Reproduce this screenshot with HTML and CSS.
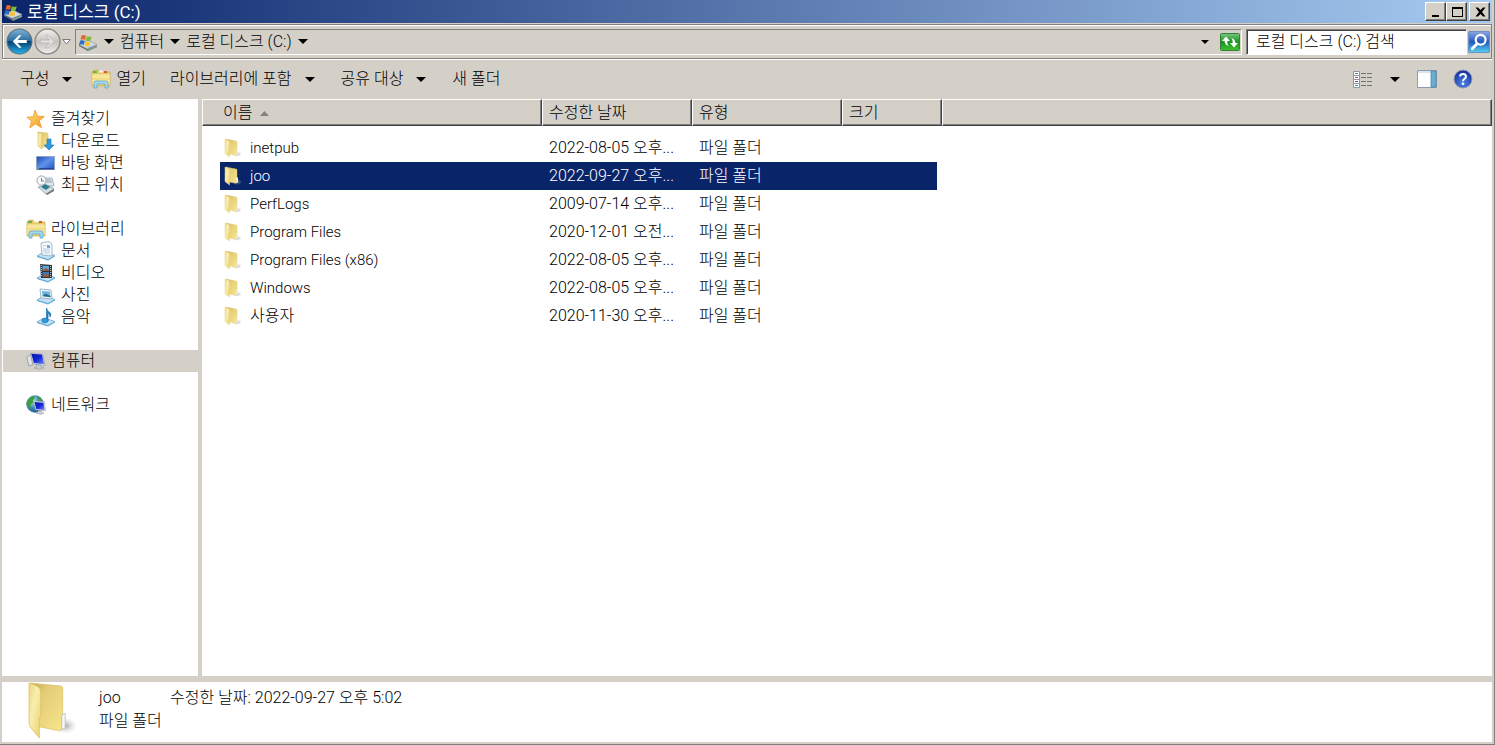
FILE: index.html
```html
<!DOCTYPE html>
<html lang="ko">
<head>
<meta charset="utf-8">
<title>로컬 디스크 (C:)</title>
<link rel="stylesheet" href="styles.css">
</head>
<body>
<svg class="defs" aria-hidden="true">
  <defs>
    <linearGradient id="gFold" x1="0" y1="0" x2="1" y2="1"><stop offset="0" stop-color="#ecd67c"/><stop offset=".4" stop-color="#f9eeb0"/><stop offset="1" stop-color="#ebd068"/></linearGradient>
    <linearGradient id="gFoldBack" x1="0" y1="0" x2="1" y2="1"><stop offset="0" stop-color="#c0a24e"/><stop offset=".3" stop-color="#e3cb78"/><stop offset="1" stop-color="#f8e68a"/></linearGradient>
    <linearGradient id="gBlue" x1="0" y1="0" x2="0" y2="1"><stop offset="0" stop-color="#7fb2d4"/><stop offset=".48" stop-color="#2a6da0"/><stop offset=".5" stop-color="#07406f"/><stop offset="1" stop-color="#24b4ee"/></linearGradient>
    <linearGradient id="gGrey" x1="0" y1="0" x2="0" y2="1"><stop offset="0" stop-color="#f4f3f1"/><stop offset=".5" stop-color="#c4c2be"/><stop offset="1" stop-color="#eeedeb"/></linearGradient>
    <linearGradient id="gScreen" x1="0" y1="0" x2="1" y2="1"><stop offset="0" stop-color="#0a1aa0"/><stop offset=".5" stop-color="#1024d8"/><stop offset="1" stop-color="#6f8cf4"/></linearGradient>
    <linearGradient id="gDesk" x1="0" y1="0" x2="1" y2="1"><stop offset="0" stop-color="#1c48b4"/><stop offset=".5" stop-color="#5f92ea"/><stop offset="1" stop-color="#1f4fc0"/></linearGradient>
    <linearGradient id="gGreen" x1="0" y1="0" x2="0" y2="1"><stop offset="0" stop-color="#7cc47c"/><stop offset=".5" stop-color="#199422"/><stop offset="1" stop-color="#3fc32e"/></linearGradient>
    <linearGradient id="gSearch" x1="0" y1="0" x2="0" y2="1"><stop offset="0" stop-color="#8fa6e2"/><stop offset=".5" stop-color="#2358c0"/><stop offset="1" stop-color="#55d4f2"/></linearGradient>
    <linearGradient id="gStar" x1="0" y1="0" x2="1" y2="1"><stop offset="0" stop-color="#ffe680"/><stop offset="1" stop-color="#f3941c"/></linearGradient>
    <radialGradient id="gHelp" cx=".5" cy=".75" r=".7"><stop offset="0" stop-color="#4f86e6"/><stop offset="1" stop-color="#15309a"/></radialGradient>
    <radialGradient id="gGlobe" cx=".35" cy=".3" r=".8"><stop offset="0" stop-color="#bfe6ee"/><stop offset=".5" stop-color="#3f8fc4"/><stop offset="1" stop-color="#164a86"/></radialGradient>
    <radialGradient id="gShadow"><stop offset="0" stop-color="#8a8a90" stop-opacity=".7"/><stop offset="1" stop-color="#c8c8cc" stop-opacity="0"/></radialGradient>
  </defs>
  <symbol id="drive" viewBox="0 0 20 20">
    <path d="M1 12.500l8 4.500 10-4v2l-9 4-9-5z" fill="#5b6670"/>
    <path d="M1 12.500l9-4.500 9 4.500-10 4z" fill="#d3d8dc" stroke="#8b959d" stroke-width=".6"/>
    <path d="M9 17l10-4v2l-9 3.800z" fill="#8a959f"/><path d="M12 16.800l2-.8" stroke="#3fc040"/>
    <path d="M3.500 3.500q2.500-1 4.500 .4L7 8Q5 6.800 2.500 7.700z" fill="#e5652a"/><path d="M8.800 4.200q2.500 1.200 5 .2L12.500 8.500q-2.500 1-4.700 0z" fill="#7cbc3c"/>
    <path d="M2.200 8.600q2.500-1 4.500.3L5.700 13q-2.200-1.200-4.700-.3z" fill="#2f6fc8"/><path d="M7.500 9.300q2.500 1.200 4.800.2l-1 4.200q-2.500 1-4.800-.2z" fill="#f3c22c"/>
  </symbol>
  <symbol id="folder" viewBox="0 0 48 56">
    <ellipse cx="37" cy="43" rx="11" ry="8" fill="url(#gShadow)"/>
    <path d="M2 1L32 4q2 0 2 2v40l-3 2-20-4z" fill="url(#gFoldBack)" stroke="#d9bf66" stroke-width=".7"/>
    <path d="M33 32l3.500-1v14l-3.500 2z" fill="#f6f6f4" stroke="#a7b6b8" stroke-width=".7"/>
    <path d="M1 1q11 3 11.500 8v25l-1.500 1v20L2 44Q1 43 1 40z" fill="url(#gFold)" stroke="#dcc065" stroke-width=".8"/>
  </symbol>
  <symbol id="folder-small" viewBox="0 0 18 20">
    <ellipse cx="13" cy="16" rx="5" ry="3" fill="url(#gShadow)"/>
    <path d="M2 1l10 2q1 .2 1 1v12.500l-1 .7L5 16z" fill="url(#gFoldBack)" stroke="#e0c66c" stroke-width=".4"/>
    <path d="M12.500 11.500h1.500v5l-1.500.5z" fill="#eef0ea"/>
    <path d="M1 1q4 1 4.500 3v15L1.500 16Q1 15.500 1 15z" fill="url(#gFold)" stroke="#e8d58a" stroke-width=".5"/>
  </symbol>
  <symbol id="star" viewBox="0 0 20 20"><path d="M9 1l2.500 6.200 7 .2-5.300 4.400 2.400 7-6.100-3.900-5.700 4 1.700-6.800L.8 8.300l6.300-.6z" fill="url(#gStar)" stroke="#ee9a32" stroke-width=".8" stroke-linejoin="round"/></symbol>
  <symbol id="download" viewBox="0 0 20 20">
    <path d="M2 1l10 1.200v14L5 16z" fill="url(#gFoldBack)" stroke="#d3b458" stroke-width=".5"/><path d="M2 1q4 .5 4 3v14l-4-3z" fill="url(#gFold)" stroke="#d3b458" stroke-width=".5"/>
    <path d="M11 8h4v6h3l-5 5-5-5h3z" fill="#2e9be0" stroke="#1d6dae" stroke-width=".6"/>
  </symbol>
  <symbol id="desktop" viewBox="0 0 20 20"><path d="M.5 3.500h18v13h-18z" fill="url(#gDesk)" stroke="#8fa6c8"/><path d="M1 15h17v1.500H1z" fill="#29449a"/><path d="M1 15.300h2" stroke="#6cd05c"/></symbol>
  <symbol id="recent" viewBox="0 0 20 20">
    <path d="M6 3h10l2 8H8z" fill="#dfe9ee" stroke="#8498a4" stroke-width=".7"/><path d="M8 5h7M8 7h8" stroke="#8ba2ae"/>
    <circle cx="5.500" cy="5.500" r="4.600" fill="#f6f8fa" stroke="#9aa6b0"/><path d="M5.500 3v3h2.500" stroke="#556" fill="none" stroke-width=".8"/>
    <path d="M2 12l9-2 7 4-8 5z" fill="#d6dde2" stroke="#7d8991" stroke-width=".7"/><path d="M5 12l4-3 5 3-4 3z" fill="#2d7c96"/><path d="M10 19l8-5v2l-7 4z" fill="#69747c"/>
  </symbol>
  <symbol id="library" viewBox="0 0 20 20">
    <path d="M1 3l2-2h4l1 2h11v14H1z" fill="#e9cd6a" stroke="#caa948" stroke-width=".6"/>
    <path d="M2 2h4v2H2z" fill="#65b257"/><path d="M8 1.500h4v2H8z" fill="#f6f4ea"/><path d="M13 2h3v2h-3z" fill="#d85838"/>
    <path d="M1 5h18v11H1z" fill="#f7e69c" stroke="#d9bd5e" stroke-width=".5"/><path d="M1 10h18" stroke="#ecd272"/>
    <path d="M3 19v-5q0-2 2-2h10q2 0 2 2v5h-3v-4H6v4z" fill="#a6d8ee" stroke="#4fa0c4" stroke-width=".7"/>
  </symbol>
  <symbol id="tray" viewBox="0 0 20 20"><path d="M1 15l7-4 11 3.500-7 4z" fill="#c4e2f4" stroke="#5faad4" stroke-width=".8"/><path d="M1 15v1l11 3.500 7-4v-1l-7 4z" fill="#5ea9d2"/></symbol>
  <symbol id="docs" viewBox="0 0 20 20"><use href="#tray"/><path d="M5 2l8-1.500 3 2.500v12L6 14z" fill="#f6f9fc" stroke="#8fa8c0" stroke-width=".8"/><path d="M7 5l3-.6M7 8h7M7 10h7M8 12h6" stroke="#a9c0dc" stroke-width=".8"/><path d="M11 4l3 .5v2.500l-3-.3z" fill="#7399cc"/></symbol>
  <symbol id="video" viewBox="0 0 20 20"><use href="#tray"/><path d="M4 1l12 1v13L5 15z" fill="#2b3338"/><path d="M6.500 2.500l6.500.4v5l-6.500 0z" fill="#5fa8dc"/><path d="M6.500 9h6.500v5l-6.500-.3z" fill="#3a78b8"/><path d="M7 7l3-2 3 2v1H7zM7 12l3-1 3 1v2H7z" fill="#9a5a34"/><path d="M5.200 2v12M14.700 3v12" stroke="#dfe5e8" stroke-width="1" stroke-dasharray="1 1"/></symbol>
  <symbol id="photo" viewBox="0 0 20 20"><use href="#tray"/><path d="M4 4l11 1 1 9-11-1z" fill="#f4f8fa" stroke="#8ba5b8" stroke-width=".8"/><path d="M6 6l8 .6.500 5.600-8-.8z" fill="#6cb8e4"/><path d="M6.500 11l3-2.500 5 2.500v1.200z" fill="#2e6d8a"/></symbol>
  <symbol id="music" viewBox="0 0 20 20"><use href="#tray"/><path d="M10.500 13V1q.5 3 3 4.200Q16 7 14 10q.2-3-2-3.600V14" fill="#2386c8" stroke="#1b6fae" stroke-width=".7"/><ellipse cx="9" cy="13.500" rx="3.200" ry="2.300" fill="#2f9ada" stroke="#1b6fae" stroke-width=".6"/></symbol>
  <symbol id="computer" viewBox="0 0 20 20">
    <path d="M.8 6l4-2.500 2 10-4 1.500z" fill="#dfe2e6" stroke="#8b9096" stroke-width=".7"/><path d="M4.500 2l12 .8L19 14.500 7 12.800z" fill="#e5e7ec" stroke="#8d93a0" stroke-width=".6"/>
    <path d="M5.300 2.700l10.700.8 2.100 9.800-10.200-1.200z" fill="url(#gScreen)"/><path d="M10 13.500l5 .7v2l3 .6-4 1.700-6-1.400 2.500-.8z" fill="#c5cad0" stroke="#8b9096" stroke-width=".5"/>
  </symbol>
  <symbol id="network" viewBox="0 0 20 20">
    <circle cx="9" cy="9" r="8.500" fill="url(#gGlobe)" stroke="#3b769a" stroke-width=".4"/><path d="M2 5q3-4 6-4 2 2-1 4 1 3-2 4-1 3 0 5-4-2-4.500-6zM11 1.500q4 1 5 5l-4-1z" fill="#3b9f44"/>
    <path d="M7.500 6l11 .8 1 9-10-1z" fill="#e8eaee" stroke="#8d93a0" stroke-width=".5"/><path d="M8.500 7l9 .7 1 7.200-8.300-.9z" fill="url(#gScreen)"/><path d="M12 15.500l4 .5v1.500l2 .5-3 1.500-5-1.200 2-.8z" fill="#c9cdd3" stroke="#8b9096" stroke-width=".4"/>
  </symbol>
  <symbol id="down" viewBox="0 0 10 5"><path d="M0 0h10L5 5z"/></symbol>
</svg>

<div class="window">
  <header class="titlebar">
    <svg class="ico"><use href="#drive"/></svg>
    <h1>로컬 디스크 (C:)</h1>
    <div class="caption">
      <button type="button" aria-label="최소화"><svg viewBox="0 0 12 12"><path d="M2 9h7v2H2z"/></svg></button>
      <button type="button" aria-label="최대화"><svg viewBox="0 0 12 12"><path d="M1 1h11v10H1zM2 3v7h9V3z" fill-rule="evenodd"/></svg></button>
      <button type="button" class="close" aria-label="닫기"><svg viewBox="0 0 12 12"><path d="M1.500 1.500h2.500L6.500 4 9 1.500h2.500L8 6l3.500 4.500H9L6.500 8 4 10.500H1.500L5 6z"/></svg></button>
    </div>
  </header>

  <nav class="addressbar">
    <div class="travel">
      <button type="button" aria-label="뒤로"><svg viewBox="0 0 26 26"><circle cx="13" cy="13" r="12" fill="url(#gBlue)" stroke="#5b6f80"/><path d="M6.500 13l6-6h2.500l-4 4.600h9v2.800h-9l4 4.600h-2.500z" fill="#fff"/></svg></button>
      <button type="button" aria-label="앞으로"><svg viewBox="0 0 26 26"><circle cx="13" cy="13" r="12" fill="url(#gGrey)" stroke="#8d8c8a" stroke-width="1.400"/><path d="M19.500 13l-6-6H11l4 4.600H6v2.800h9L11 19h2.500z" fill="#e4e2df" stroke="#b3b1ad" stroke-width=".7"/></svg></button>
      <button type="button" class="history" aria-label="최근 페이지"><svg viewBox="0 0 9 6"><path d="M.8.5h7.400L4.500 5z" fill="#fff" stroke="#77787c"/></svg></button>
    </div>
    <div class="address">
      <svg class="ico"><use href="#drive"/></svg>
      <svg class="arrow"><use href="#down"/></svg>
      <a href="#computer">컴퓨터</a>
      <svg class="arrow"><use href="#down"/></svg>
      <a href="#c">로컬 디스크 (C:)</a>
      <svg class="arrow"><use href="#down"/></svg>
      <button type="button" class="recent" aria-label="이전 위치"><svg class="small-arrow"><use href="#down"/></svg></button>
      <button type="button" aria-label="새로 고침"><svg class="refresh" viewBox="0 0 20 18"><rect x=".5" y=".5" width="19" height="17" rx="1" fill="url(#gGreen)" stroke="#37803a"/><path d="M6 3.500L2 8h2.600q.2 4 4 5Q7 11 7.300 8H10zM14 14.500l4-4.500h-2.600q-.2-4-4-5 1.600 2 1.300 5H10z" fill="#fff"/></svg></button>
    </div>
    <div class="search">
      <input type="text" aria-label="검색" placeholder="로컬 디스크 (C:) 검색">
      <button type="button" aria-label="검색 실행"><svg viewBox="0 0 20 20"><rect x=".5" y=".5" width="19" height="19" rx="1" fill="url(#gSearch)" stroke="#6f8fc4"/><circle cx="11.500" cy="8" r="4.500" fill="none" stroke="#fff" stroke-width="2"/><path d="M8.300 11.500L4 16" stroke="#fff" stroke-width="2.600" stroke-linecap="round"/></svg></button>
    </div>
  </nav>

  <div class="toolbar">
    <button type="button">구성<svg class="arrow"><use href="#down"/></svg></button>
    <button type="button" class="open"><svg class="ico"><use href="#library"/></svg>열기</button>
    <button type="button">라이브러리에 포함<svg class="arrow"><use href="#down"/></svg></button>
    <button type="button">공유 대상<svg class="arrow"><use href="#down"/></svg></button>
    <button type="button">새 폴더</button>
    <div class="tools">
      <button type="button" class="view" aria-label="보기"><svg class="ico" viewBox="0 0 20 20"><path d="M.5 2.500h6v4h-6zM.5 6.500h6v4h-6zM.5 10.500h6v4h-6zM.5 14.500h6v4h-6z" fill="#fff" stroke="#8b95a3"/><path d="M2 4.500h3M2 16.500h3" stroke="#3a9a9c"/><path d="M2 8.500h3" stroke="#b84a6c"/><path d="M2 12.500h3" stroke="#5548a8"/><path d="M8 4.500h5m1 0h5M8 8.500h5m1 0h5M8 12.500h5m1 0h5M8 16.500h5m1 0h5" stroke="#6d747c"/></svg><svg class="arrow"><use href="#down"/></svg></button>
      <button type="button" aria-label="미리 보기 창"><svg class="ico" viewBox="0 0 20 20"><path d="M.5 1.500h19v17H.5z" fill="#fff" stroke="#8b9cb0"/><path d="M1 2h18v2H1z" fill="#d9e6f2"/><path d="M14 2h5v16h-5z" fill="#69b0d0" stroke="#4a86ac" stroke-width=".8"/></svg></button>
      <button type="button" aria-label="도움말"><svg class="ico" viewBox="0 0 20 20"><circle cx="10" cy="10" r="9" fill="url(#gHelp)" stroke="#8f98bc"/><path d="M7 7.500Q7.200 5 10 5t3 2.500q0 1.500-1.700 2.500-1.300.8-1.300 2.200" fill="none" stroke="#fff" stroke-width="2"/><circle cx="10" cy="14.800" r="1.300" fill="#fff"/></svg></button>
    </div>
  </div>

  <div class="body">
    <aside class="sidebar">
      <ul>
        <li><a href="#fav"><svg class="ico"><use href="#star"/></svg>즐겨찾기</a></li>
        <li class="sub"><a href="#dl"><svg class="ico"><use href="#download"/></svg>다운로드</a></li>
        <li class="sub"><a href="#desk"><svg class="ico"><use href="#desktop"/></svg>바탕 화면</a></li>
        <li class="sub"><a href="#rec"><svg class="ico"><use href="#recent"/></svg>최근 위치</a></li>
      </ul>
      <ul>
        <li><a href="#lib"><svg class="ico"><use href="#library"/></svg>라이브러리</a></li>
        <li class="sub"><a href="#doc"><svg class="ico"><use href="#docs"/></svg>문서</a></li>
        <li class="sub"><a href="#vid"><svg class="ico"><use href="#video"/></svg>비디오</a></li>
        <li class="sub"><a href="#pic"><svg class="ico"><use href="#photo"/></svg>사진</a></li>
        <li class="sub"><a href="#mus"><svg class="ico"><use href="#music"/></svg>음악</a></li>
      </ul>
      <ul>
        <li class="current"><a href="#pc"><svg class="ico"><use href="#computer"/></svg>컴퓨터</a></li>
      </ul>
      <ul>
        <li><a href="#net"><svg class="ico"><use href="#network"/></svg>네트워크</a></li>
      </ul>
    </aside>

    <main class="files">
      <table>
        <colgroup><col class="c-name"><col class="c-date"><col class="c-type"><col class="c-size"><col></colgroup>
        <thead><tr><th scope="col">이름<svg class="sort" viewBox="0 0 9 5"><path d="M0 5h9L4.500 0z" fill="#85827c"/></svg></th><th scope="col">수정한 날짜</th><th scope="col">유형</th><th scope="col">크기</th><th></th></tr></thead>
        <tbody>
          <tr><td><span class="name latin"><svg class="fold"><use href="#folder-small"/></svg>inetpub</span></td><td>2022-08-05 오후...</td><td>파일 폴더</td><td></td></tr>
          <tr class="selected"><td><span class="name latin"><svg class="fold"><use href="#folder-small"/></svg>joo</span></td><td>2022-09-27 오후...</td><td>파일 폴더</td><td></td></tr>
          <tr><td><span class="name latin"><svg class="fold"><use href="#folder-small"/></svg>PerfLogs</span></td><td>2009-07-14 오후...</td><td>파일 폴더</td><td></td></tr>
          <tr><td><span class="name latin"><svg class="fold"><use href="#folder-small"/></svg>Program Files</span></td><td>2020-12-01 오전...</td><td>파일 폴더</td><td></td></tr>
          <tr><td><span class="name latin"><svg class="fold"><use href="#folder-small"/></svg>Program Files (x86)</span></td><td>2022-08-05 오후...</td><td>파일 폴더</td><td></td></tr>
          <tr><td><span class="name latin"><svg class="fold"><use href="#folder-small"/></svg>Windows</span></td><td>2022-08-05 오후...</td><td>파일 폴더</td><td></td></tr>
          <tr><td><span class="name"><svg class="fold"><use href="#folder-small"/></svg>사용자</span></td><td>2020-11-30 오후...</td><td>파일 폴더</td><td></td></tr>
        </tbody>
      </table>
    </main>
  </div>

  <footer class="details">
    <svg class="big"><use href="#folder"/></svg>
    <div><p>joo</p><p>파일 폴더</p></div>
    <p>수정한 날짜: 2022-09-27 오후 5:02</p>
  </footer>
</div>
</body>
</html>
```
FILE: styles.css
```css
* { box-sizing: border-box; }

body {
  margin: 0;
  background: #d4d0c8;
  color: #000;
  font: 300 16px/22px Roboto, "Noto Sans CJK KR", sans-serif;
}

button {
  display: flex;
  align-items: center;
  margin: 0;
  padding: 0;
  border: 0;
  background: none;
  color: inherit;
  font: inherit;
}

a { color: inherit; text-decoration: none; }
h1, p, ul { margin: 0; padding: 0; font: inherit; }
svg { display: block; flex: none; }

.defs { position: absolute; width: 0; height: 0; }
.ico { width: 20px; height: 20px; }
.arrow { width: 10px; height: 5px; }
.small-arrow { width: 8px; height: 4px; }

.window {
  display: flex;
  flex-direction: column;
  height: 100vh;
  padding: 0 2px 2px;
  border-right: 1px solid #808080;
  border-bottom: 1px solid #808080;
}

.titlebar {
  display: flex;
  align-items: center;
  gap: 4px;
  height: 23px;
  padding: 0 2px 0 1px;
  background: linear-gradient(90deg, #0a246a, #a6caf0);
  color: #fff;
}

.titlebar h1 { flex: 1; font-size: 17px; font-weight: 400; }

.caption { display: flex; }

.caption button {
  justify-content: center;
  width: 21px;
  height: 19px;
  background: #d4d0c8;
  border: 1px solid;
  border-color: #fff #404040 #404040 #fff;
  box-shadow: inset -1px -1px #808080;
}

.caption .close { margin-left: 2px; }
.caption svg { width: 12px; height: 12px; }

.addressbar {
  display: flex;
  align-items: center;
  gap: 4px;
  height: 35px;
  margin-top: 1px;
  padding: 0 1px 0 3px;
  border: 1px solid #808080;
  box-shadow: inset 1px 1px #fff, 0 1px #fff;
}

.travel { display: flex; align-items: center; }
.travel svg { width: 27px; height: 27px; }
.travel button:nth-child(2) { padding-left: 1px; }
.travel .history { padding-left: 1px; }
.travel .history svg { width: 9px; height: 6px; }

.address,
.search input {
  height: 26px;
  border: 1px solid;
  border-color: #808080 #fff #fff #808080;
}

.address {
  display: flex;
  flex: 1;
  align-items: center;
  gap: 6px;
  padding: 0 1px 0 2px;
}

.address .recent { margin-left: auto; padding-right: 5px; }
.refresh { width: 20px; height: 18px; }

.search { display: flex; align-items: center; gap: 1px; }

.search input {
  width: 221px;
  padding: 0 9px;
  background: #fff;
  box-shadow: inset 1px 1px #404040;
  color: #000;
  font: inherit;
}

.search input::placeholder { color: #000; opacity: 1; }
.search svg { width: 22px; height: 22px; }

.toolbar {
  display: flex;
  align-items: center;
  gap: 26px;
  height: 40px;
  padding: 0 19px 0 18px;
}

.toolbar button { gap: 13px; }
.toolbar .open { gap: 5px; margin: 0 -2px 0 -7px; }
.tools { display: flex; gap: 16px; margin-left: auto; }
.toolbar .view { gap: 17px; margin-right: 1px; }

.body {
  display: flex;
  flex: 1;
  gap: 4px;
  min-height: 0;
}

.sidebar {
  display: flex;
  flex-direction: column;
  gap: 22px;
  width: 196px;
  padding: 9px 0 0 1px;
  background: #fff;
}

.sidebar ul { list-style: none; }

.sidebar a {
  display: flex;
  align-items: center;
  gap: 5px;
  height: 22px;
  padding-left: 23px;
}

.sidebar .sub a { padding-left: 33px; }
.sidebar .current { background: #d4d0c8; }

.files {
  flex: 1;
  min-width: 0;
  background: #fff;
}

table {
  width: 100%;
  table-layout: fixed;
  border-spacing: 0;
}

.c-name { width: 340px; }
.c-date, .c-type { width: 150px; }
.c-size { width: 100px; }

th {
  height: 27px;
  padding: 0 0 0 6px;
  background: #d4d0c8;
  border: 1px solid;
  border-color: #fff #404040 #404040 #fff;
  box-shadow: inset -1px -1px #808080;
  font-weight: 300;
  text-align: left;
}

th:first-child { padding-left: 20px; }
.sort { display: inline-block; width: 9px; height: 5px; margin-left: 8px; vertical-align: middle; }

tbody::before { content: ""; display: block; height: 8px; }

td {
  height: 28px;
  padding: 0 0 0 7px;
  background-clip: padding-box;
  white-space: nowrap;
}

td:first-child { padding-left: 4px; border-left: 18px solid transparent; }
td:nth-child(4) { border-right: 5px solid transparent; }
.selected td { background-color: #0a246a; color: #fff; }

.name { display: flex; align-items: center; gap: 8px; }
.latin { font-size: 15px; }
.fold { width: 18px; height: 20px; }

.details {
  display: flex;
  gap: 22px;
  height: 60px;
  margin-top: 6px;
  padding: 0 26px;
  background: #fff;
  line-height: 23px;
}

.details .big { width: 49px; height: 57px; }
.details > div, .details > p { padding-top: 4px; }
.details > div { width: 49px; white-space: nowrap; }
```
